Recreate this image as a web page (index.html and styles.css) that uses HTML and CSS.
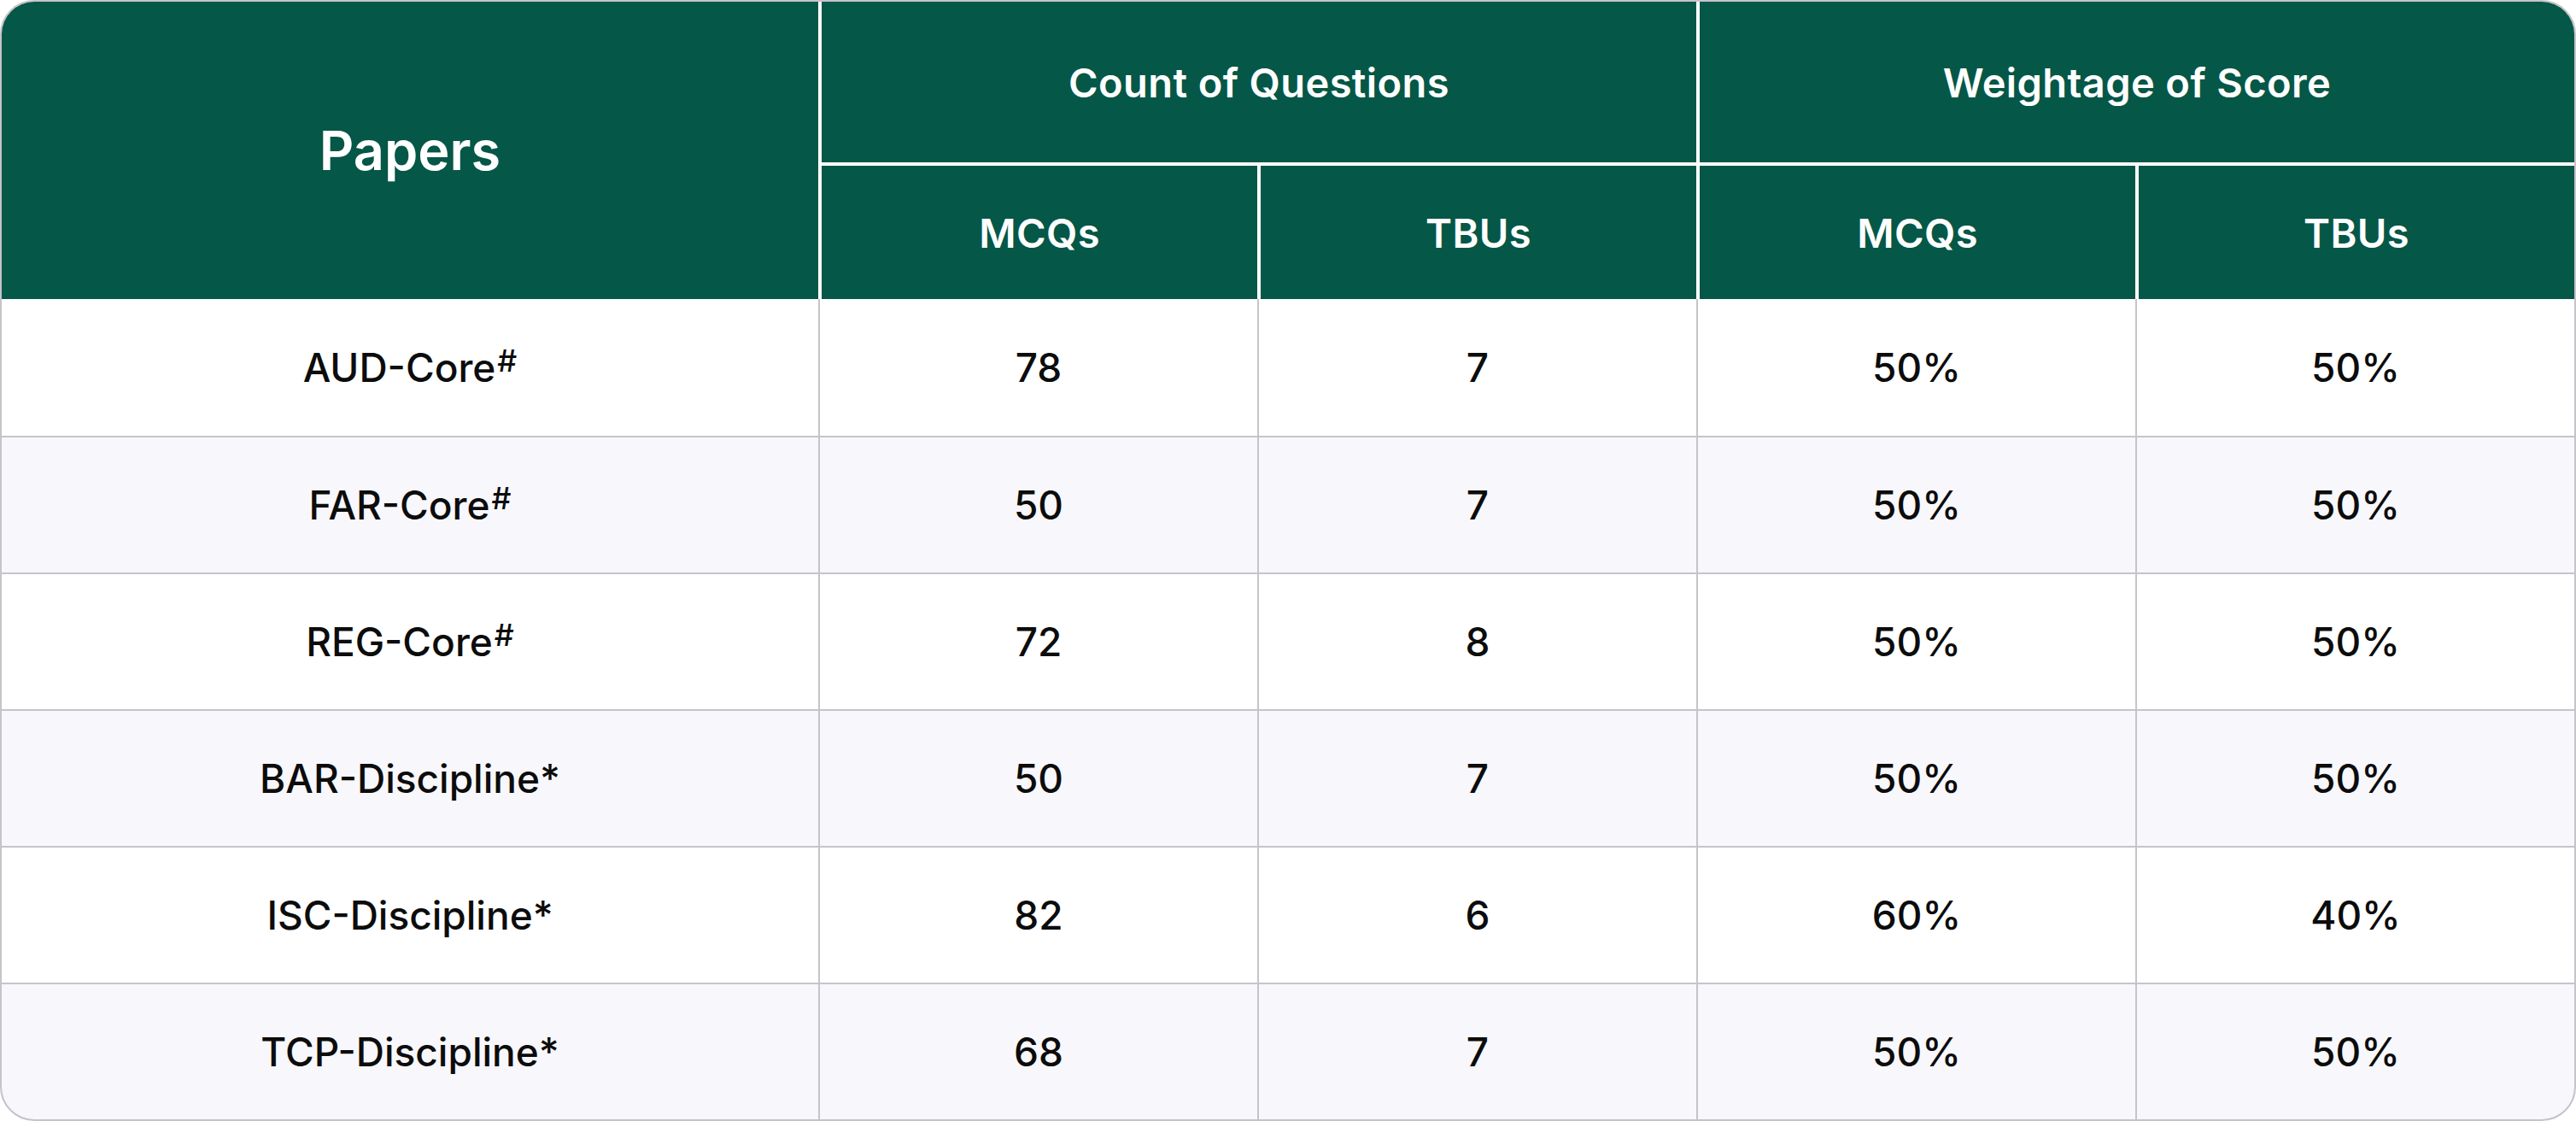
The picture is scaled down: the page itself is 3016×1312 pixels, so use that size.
FILE: index.html
```html
<!DOCTYPE html>
<html lang="en">
<head>
<meta charset="utf-8">
<title>Papers</title>
<link rel="stylesheet" href="styles.css">
</head>
<body>
<div class="table">
  <div class="head">
    <div class="hcell papers">Papers</div>
    <div class="hcell group g1">Count of Questions</div>
    <div class="hcell group g2">Weightage of Score</div>
    <div class="hcell sub">MCQs</div>
    <div class="hcell sub">TBUs</div>
    <div class="hcell sub">MCQs</div>
    <div class="hcell sub">TBUs</div>
  </div>
  <div class="body">
    <div class="row first">
      <div class="cell">AUD-Core<sup>#</sup></div>
      <div class="cell">78</div>
      <div class="cell">7</div>
      <div class="cell">50%</div>
      <div class="cell">50%</div>
    </div>
    <div class="row alt">
      <div class="cell">FAR-Core<sup>#</sup></div>
      <div class="cell">50</div>
      <div class="cell">7</div>
      <div class="cell">50%</div>
      <div class="cell">50%</div>
    </div>
    <div class="row">
      <div class="cell">REG-Core<sup>#</sup></div>
      <div class="cell">72</div>
      <div class="cell">8</div>
      <div class="cell">50%</div>
      <div class="cell">50%</div>
    </div>
    <div class="row alt">
      <div class="cell">BAR-Discipline*</div>
      <div class="cell">50</div>
      <div class="cell">7</div>
      <div class="cell">50%</div>
      <div class="cell">50%</div>
    </div>
    <div class="row">
      <div class="cell">ISC-Discipline*</div>
      <div class="cell">82</div>
      <div class="cell">6</div>
      <div class="cell">60%</div>
      <div class="cell">40%</div>
    </div>
    <div class="row alt">
      <div class="cell">TCP-Discipline*</div>
      <div class="cell">68</div>
      <div class="cell">7</div>
      <div class="cell">50%</div>
      <div class="cell">50%</div>
    </div>
  </div>
</div>
</body>
</html>
```

FILE: styles.css
```css
html, body {
  margin: 0;
  padding: 0;
  background: #ffffff;
}

body {
  font-family: Inter, "Noto Sans", "Liberation Sans", sans-serif;
}

.table {
  width: 3016px;
  height: 1312px;
  box-sizing: border-box;
  border: 2px solid #c6c4ca;
  border-radius: 40px;
  overflow: hidden;
  background: #c6c4ca;
}

.head {
  display: grid;
  grid-template-columns: 956px repeat(4, 510px);
  grid-template-rows: 188px 156px;
  gap: 4px;
  background: #ffffff;
}

.hcell {
  background: #055747;
  color: #ffffff;
  display: flex;
  align-items: center;
  justify-content: center;
  font-weight: 600;
  font-size: 47px;
  letter-spacing: 0.4px;
}

.papers {
  grid-row: 1 / span 2;
  grid-column: 1;
  font-size: 63px;
  letter-spacing: 0;
}

.g1 {
  grid-row: 1;
  grid-column: 2 / span 2;
}

.g2 {
  grid-row: 1;
  grid-column: 4 / span 2;
}

.body {
  display: flex;
  flex-direction: column;
  gap: 2px;
  background: #c6c4ca;
}

.row {
  display: grid;
  grid-template-columns: 956px repeat(4, 512px);
  height: 158px;
  gap: 2px;
  background: #c6c4ca;
}

.row.first {
  height: 160px;
}

.cell {
  background: #ffffff;
  color: #0c0c0c;
  display: flex;
  align-items: center;
  justify-content: center;
  font-size: 46px;
  font-weight: 500;
}

.row.alt .cell {
  background: #f8f7fb;
}

.cell sup {
  font-size: 36px;
  line-height: 0;
  position: relative;
  top: -8px;
  margin-left: 2px;
}
```
